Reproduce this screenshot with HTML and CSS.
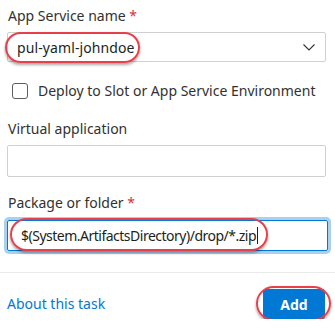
FILE: index.html
```html
<!DOCTYPE html>
<html>
<head>
<meta charset="utf-8">
<link rel="stylesheet" href="styles.css">
</head>
<body>
<div class="panel">
  <div class="field first">
    <div class="label">App Service name <span class="req">*</span></div>
    <div class="select annotated">
      <span class="value">pul-yaml-johndoe</span>
      <svg class="chev" width="12" height="7" viewBox="0 0 12 7"><path d="M0.5 0.5 L6 6 L11.5 0.5" fill="none" stroke="#333" stroke-width="1.1"/></svg>
      <span class="ring ring-select"></span>
    </div>
  </div>
  <label class="check-row">
    <span class="checkbox"></span>
    <span class="check-text">Deploy to Slot or App Service Environment</span>
  </label>
  <div class="field">
    <div class="label">Virtual application</div>
    <div class="input empty"></div>
  </div>
  <div class="field">
    <div class="label">Package or folder <span class="req">*</span></div>
    <div class="input focused annotated">
      <span class="value tight">$(System.ArtifactsDirectory)/drop/*.zip</span><span class="caret"></span>
      <span class="ring ring-input"></span>
    </div>
  </div>
</div>
<div class="footer">
  <a class="link">About this task</a>
  <div class="btn-wrap">
    <button class="btn">Add</button>
    <span class="ring ring-btn"></span>
  </div>
</div>
</body>
</html>
```
FILE: styles.css
```css
html, body {
  margin: 0;
  padding: 0;
  background: #ffffff;
}
body {
  font-family: "Noto Sans", "Open Sans", sans-serif;
  font-size: 14px;
  color: #323130;
  width: 335px;
  overflow: hidden;
}
.panel {
  padding: 6px 9px 21px 7px;
  border-bottom: 1px solid #eaeaea;
}
.field {
  display: flex;
  flex-direction: column;
  gap: 6px;
}
.label {
  line-height: 20px;
  height: 20px;
  padding-left: 1px;
  color: #323130;
}
.req {
  color: #d13438;
}
.annotated {
  position: relative;
}
.select {
  height: 30px;
  border: 1px solid #d0d0d0;
  border-radius: 2px;
  box-sizing: border-box;
  display: flex;
  align-items: center;
  justify-content: space-between;
  padding: 0 10px 0 9px;
  color: #201f1e;
}
.select .value {
  letter-spacing: 0.1px;
}
.chev {
  display: block;
}
.check-row {
  display: flex;
  align-items: center;
  gap: 10px;
  height: 22px;
  margin: 18px 0 17px 5px;
}
.checkbox {
  width: 16px;
  height: 16px;
  box-sizing: border-box;
  border: 1px solid #605e5c;
  border-radius: 3px;
}
.check-text {
  line-height: 20px;
  color: #323130;
}
.input {
  height: 32px;
  box-sizing: border-box;
  border: 1px solid #d0d0d0;
  border-radius: 2px;
  display: flex;
  align-items: center;
  padding: 0 0 0 13px;
  color: #201f1e;
}
.field + .field {
  margin-top: 16px;
}
.input.focused {
  height: 31px;
  margin-top: 1px;
  border: 1px solid #0078d4;
  box-shadow: 0 0 0 3px #a9d0f0;
  margin-right: -2px;
}
.tight {
  letter-spacing: -0.5px;
}
.caret {
  width: 1px;
  height: 17px;
  background: #201f1e;
  margin-left: 1px;
}
.ring {
  position: absolute;
  border: 2.5px solid #e8404a;
  border-radius: 999px;
  box-shadow: 0 2px 3px rgba(0, 0, 0, 0.35);
  pointer-events: none;
}
.ring-select {
  left: -3px;
  top: -1px;
  width: 131px;
  height: 27px;
}
.ring-input {
  left: 2px;
  top: -3px;
  width: 254px;
  height: 29px;
}
.footer {
  display: flex;
  justify-content: space-between;
  align-items: center;
  padding: 16px 10px 0 7px;
}
.link {
  color: #0078d4;
  line-height: 20px;
}
.btn-wrap {
  position: relative;
}
.btn {
  display: block;
  width: 62px;
  height: 30px;
  border: none;
  border-radius: 3px;
  background: #0078d4;
  color: #ffffff;
  font-family: inherit;
  font-size: 14px;
  font-weight: 700;
  padding: 0;
}
.ring-btn {
  left: -7px;
  top: -3px;
  width: 71px;
  height: 31px;
}
```
